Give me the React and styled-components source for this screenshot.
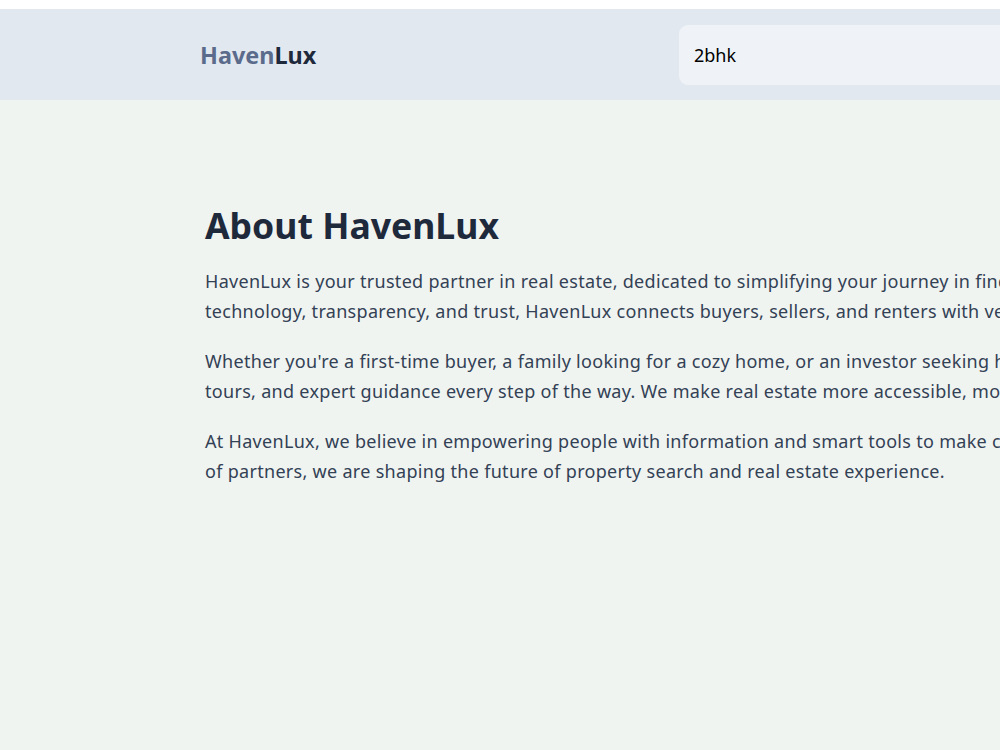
import { createGlobalStyle, styled } from "styled-components";

const GlobalStyle = createGlobalStyle`
  body {
    margin: 9px 0 0;
    background: #ffffff;
    font-family: "Noto Sans", "Open Sans", sans-serif;
    overflow-x: hidden;
  }
`;

const Page = styled.div`
  min-height: calc(100vh - 9px);
  background: #f0f4f1;
  overflow: hidden;
`;

const Header = styled.header`
  height: 91px;
  background: #e2e8f0;
  display: flex;
  align-items: center;
  padding-left: 200px;
`;

const Logo = styled.div`
  flex: 0 0 479px;
  font-size: 23.4px;
  font-weight: 700;
  color: #1e293b;
  white-space: nowrap;

  span {
    color: #5b6b8b;
  }
`;

const Search = styled.input`
  flex: 0 0 420px;
  height: 60px;
  box-sizing: border-box;
  border: none;
  outline: none;
  border-radius: 9px;
  background: #eff3f8;
  padding: 0 15px;
  font-family: inherit;
  font-size: 18px;
  color: #000;
`;

const About = styled.section`
  padding: 104px 0 0 205px;
`;

const Title = styled.h1`
  margin: 0 0 19px;
  font-size: 35.6px;
  line-height: 1.2;
  font-weight: 700;
  color: #1e293b;
`;

const Para = styled.p`
  margin: 0 0 20px;
  font-size: 18px;
  letter-spacing: 0.3px;
  line-height: 30px;
  color: #334155;
  white-space: nowrap;
`;

const paragraphs = [
  [
    "HavenLux is your trusted partner in real estate, dedicated to simplifying your journey in finding the perfect home. Built on",
    "technology, transparency, and trust, HavenLux connects buyers, sellers, and renters with verified listings and seamless experiences.",
  ],
  [
    "Whether you're a first-time buyer, a family looking for a cozy home, or an investor seeking high-value opportunities, we offer verified listings, virtual",
    "tours, and expert guidance every step of the way. We make real estate more accessible, more transparent, and more rewarding.",
  ],
  [
    "At HavenLux, we believe in empowering people with information and smart tools to make confident decisions. With a growing network of agents and a community",
    "of partners, we are shaping the future of property search and real estate experience.",
  ],
];

export default function App() {
  return (
    <Page>
      <GlobalStyle />
      <Header>
        <Logo>
          <span>Haven</span>Lux
        </Logo>
        <Search type="text" defaultValue="2bhk" />
      </Header>
      <About>
        <Title>About HavenLux</Title>
        {paragraphs.map((lines, i) => (
          <Para key={i}>
            {lines.map((line, j) => (
              <span key={j}>
                {line}
                {j < lines.length - 1 && <br />}
              </span>
            ))}
          </Para>
        ))}
      </About>
    </Page>
  );
}
